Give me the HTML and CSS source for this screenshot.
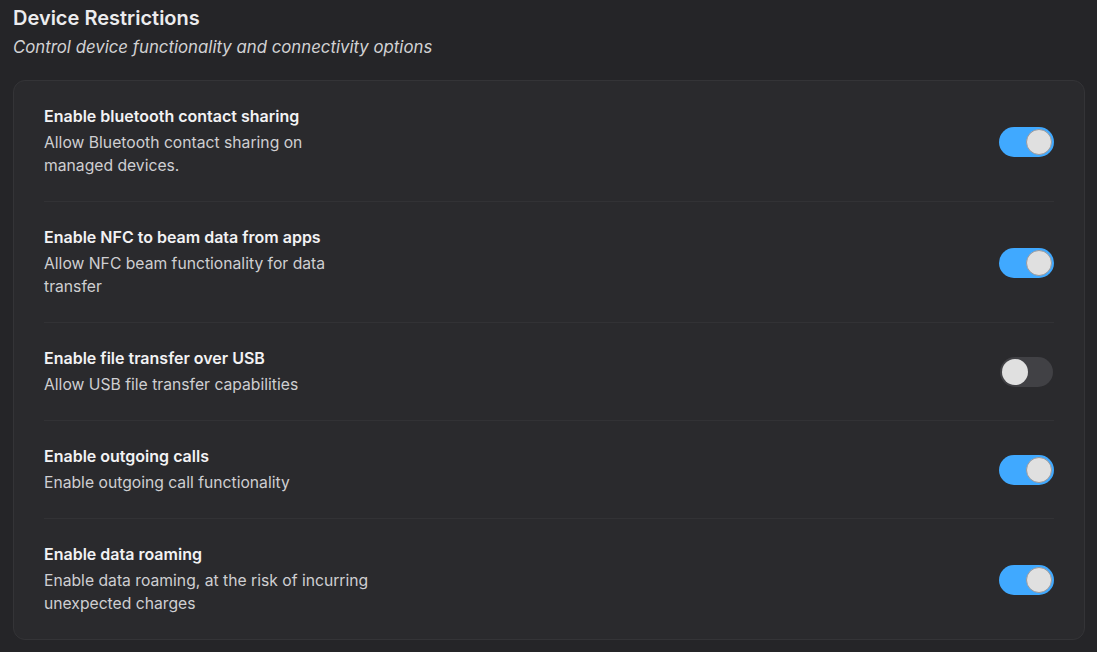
FILE: index.html
```html
<!DOCTYPE html>
<html lang="en">
<head>
<meta charset="utf-8">
<title>Device Restrictions</title>
<link rel="stylesheet" href="styles.css">
</head>
<body>
<main class="page">
  <header class="header">
    <h1 class="title">Device Restrictions</h1>
    <p class="subtitle">Control device functionality and connectivity options</p>
  </header>
  <section class="card">
    <div class="row">
      <div class="text">
        <div class="row-title">Enable bluetooth contact sharing</div>
        <div class="row-desc">Allow Bluetooth contact sharing on managed devices.</div>
      </div>
      <span class="toggle on" role="switch" aria-checked="true"><span class="knob"></span></span>
    </div>
    <div class="row">
      <div class="text">
        <div class="row-title">Enable NFC to beam data from apps</div>
        <div class="row-desc">Allow NFC beam functionality for data transfer</div>
      </div>
      <span class="toggle on" role="switch" aria-checked="true"><span class="knob"></span></span>
    </div>
    <div class="row">
      <div class="text">
        <div class="row-title">Enable file transfer over USB</div>
        <div class="row-desc">Allow USB file transfer capabilities</div>
      </div>
      <span class="toggle off" role="switch" aria-checked="false"><span class="knob"></span></span>
    </div>
    <div class="row">
      <div class="text">
        <div class="row-title">Enable outgoing calls</div>
        <div class="row-desc">Enable outgoing call functionality</div>
      </div>
      <span class="toggle on" role="switch" aria-checked="true"><span class="knob"></span></span>
    </div>
    <div class="row">
      <div class="text">
        <div class="row-title">Enable data roaming</div>
        <div class="row-desc">Enable data roaming, at the risk of incurring unexpected charges</div>
      </div>
      <span class="toggle on" role="switch" aria-checked="true"><span class="knob"></span></span>
    </div>
  </section>
</main>
</body>
</html>
```

FILE: styles.css
```css
html, body {
  margin: 0;
  padding: 0;
  background: #252528;
  height: 100%;
}

body {
  font-family: Inter, "Noto Sans", "Liberation Sans", sans-serif;
  color: #f0f0f2;
  overflow: hidden;
}

.page {
  padding: 6px 12px 11px 13px;
}

.header {
  display: flex;
  flex-direction: column;
  gap: 7px;
}

.title {
  margin: 0;
  font-size: 20px;
  line-height: 24px;
  font-weight: 600;
  color: #ececee;
}

.subtitle {
  margin: 0;
  font-size: 16.8px;
  line-height: 24px;
  font-style: italic;
  color: #d2d2d4;
  margin-top: -2px;
}

.card {
  margin-top: 21px;
  background: #2a2a2d;
  border: 1px solid #343437;
  border-radius: 12px;
  padding: 0 30px;
}

.row {
  display: flex;
  align-items: center;
  justify-content: space-between;
  padding: 25px 0 24px;
  border-bottom: 1px solid #323235;
}

.row:last-child {
  border-bottom: none;
}

.text {
  display: flex;
  flex-direction: column;
  gap: 4px;
}

.row-title {
  font-size: 16px;
  line-height: 21px;
  font-weight: 600;
  color: #f2f2f4;
}

.row-desc {
  font-size: 15.7px;
  line-height: 23px;
  color: #cfcfd2;
  max-width: 330px;
}

.toggle {
  flex: none;
  display: flex;
  align-items: center;
  width: 55px;
  height: 30px;
  border-radius: 15px;
  padding: 0 2px;
  box-sizing: border-box;
}

.toggle.on {
  background: #40a9ff;
  justify-content: flex-end;
}

.toggle.off {
  background: #414145;
  justify-content: flex-start;
  width: 53px;
  margin-right: 1px;
}

.knob {
  width: 26px;
  height: 26px;
  border-radius: 50%;
  background: #e0e0e0;
  box-sizing: border-box;
}

.toggle.on .knob {
  border: 1.5px solid #9a9a9e;
}
```
